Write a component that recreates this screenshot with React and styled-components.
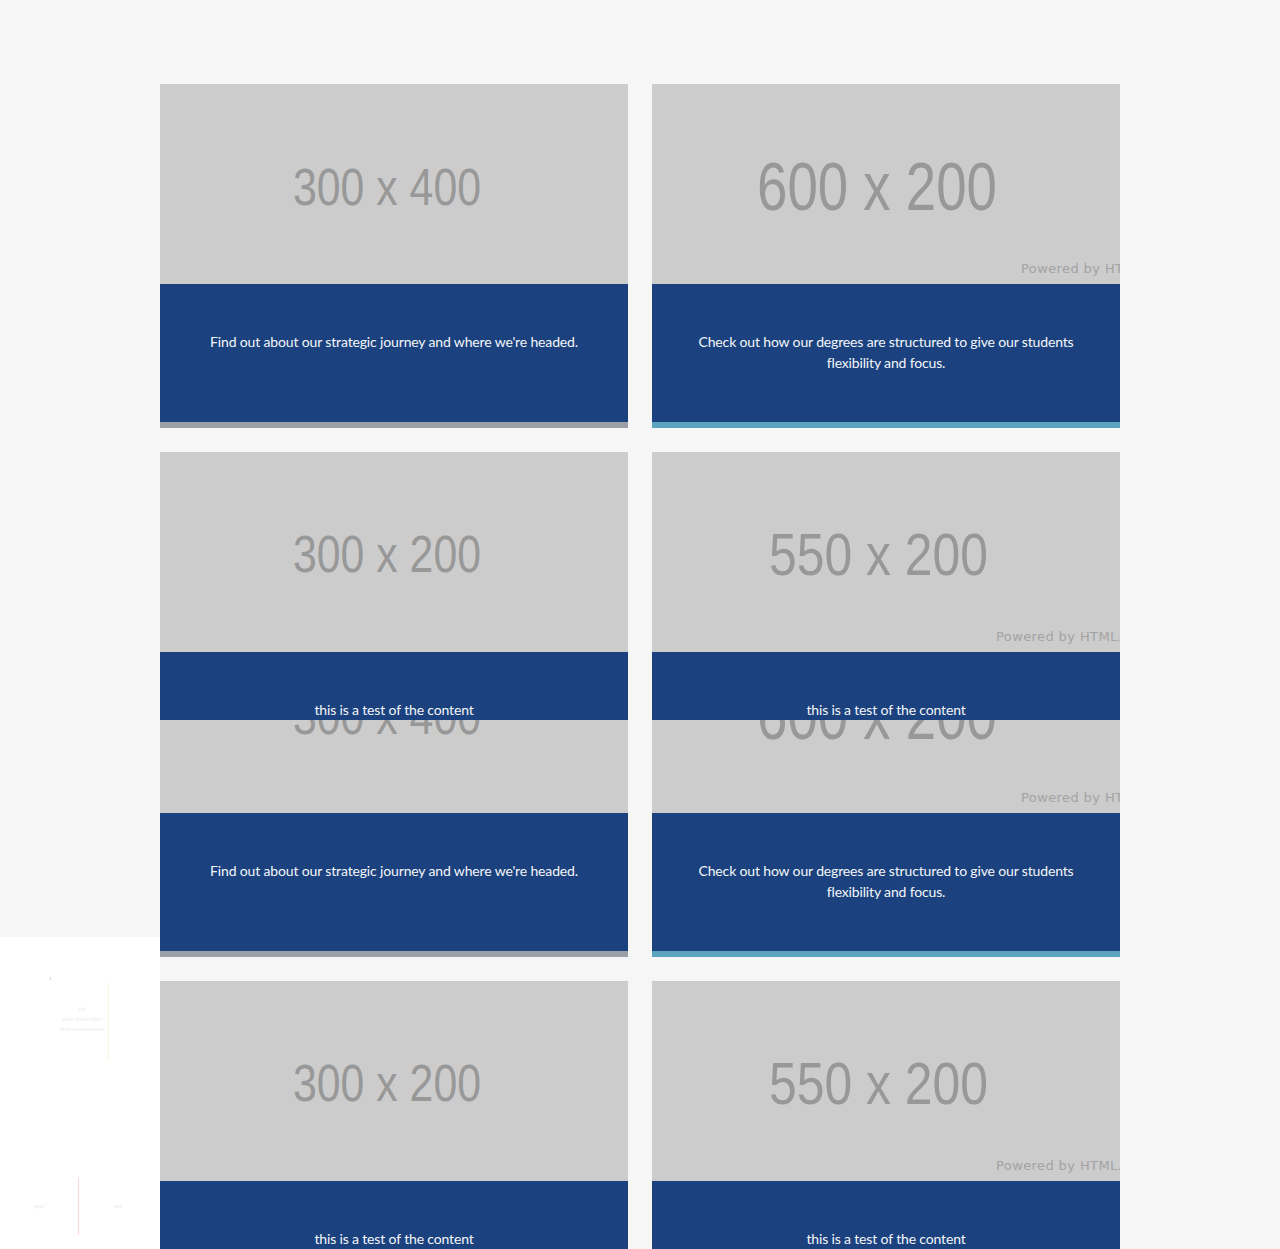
import React from "react";
import styled, { createGlobalStyle } from "styled-components";

const GlobalStyle = createGlobalStyle`
  html, body {
    margin: 0;
    padding: 0;
    background: #f6f6f6;
    overflow: hidden;
  }
  body {
    font-family: Lato, "Liberation Sans", sans-serif;
  }
`;

const Page = styled.div`
  display: grid;
  grid-template-columns: 160px 960px 1fr;
  padding-top: 84px;
  height: 1249px;
  box-sizing: border-box;
`;

const Sidebar = styled.aside`
  align-self: end;
  height: 312px;
  background: #ffffff;
  display: flex;
  flex-direction: column;
  justify-content: space-between;
  box-sizing: border-box;
  padding: 40px 0 14px 0;
`;

const SideTop = styled.div`
  display: flex;
  align-items: flex-start;
  padding-left: 50px;
`;

const Tick = styled.span`
  width: 1px;
  height: 3px;
  background: #d6d6d6;
`;

const SideBlock = styled.div`
  margin-top: 5px;
  margin-left: 4px;
  width: 54px;
  height: 78px;
  border-right: 1px solid #fbf6dc;
  display: flex;
  flex-direction: column;
  align-items: center;
  padding-top: 24px;
  box-sizing: border-box;
  gap: 4px;
  font-family: "Liberation Sans", sans-serif;
  font-size: 5px;
  line-height: 6px;
  color: #e9efe6;
  text-align: center;
`;

const SideBottom = styled.div`
  display: flex;
  align-items: center;
  height: 58px;
  font-family: "Liberation Sans", sans-serif;
  font-size: 5px;
  color: #e8e8ef;
`;

const SideLink = styled.span`
  width: 78px;
  text-align: center;
`;

const Divider = styled.span`
  width: 1px;
  align-self: stretch;
  background: #fbd7d7;
`;

const Content = styled.main`
  display: flex;
  flex-direction: column;
`;

const Row = styled.div`
  display: grid;
  grid-template-columns: 468px 468px;
  column-gap: 24px;
  margin-top: ${(p) => (p.$joined ? 0 : 24)}px;
  &:first-child {
    margin-top: 0;
  }
`;

const Card = styled.article`
  display: flex;
  flex-direction: column;
`;

const ImageFrame = styled.div`
  height: ${(p) => p.$h}px;
  overflow: hidden;
  display: flex;
  flex-direction: column;
  justify-content: flex-end;
  background: #cccccc;
  svg {
    flex-shrink: 0;
    display: block;
  }
`;

const Body = styled.div`
  height: ${(p) => p.$h}px;
  background: #1b427e;
  border-bottom: ${(p) => (p.$accent ? `6px solid ${p.$accent}` : "none")};
  box-sizing: content-box;
  padding: 47px 36px 0;
  margin: 0;
  color: #f4f6fa;
  font-size: 14px;
  line-height: 21px;
  letter-spacing: -0.15px;
  text-align: center;
  overflow: visible;
`;

const images = {
  "300x400": { label: "300 x 400", x: 133, len: 188, y: 121, size: 51.5 },
  "300x200": { label: "300 x 200", x: 133, len: 188, y: 120, size: 51.5 },
  "600x200": { label: "600 x 200", x: 105, len: 240, y: 126, size: 68.5, powered: 369 },
  "550x200": { label: "550 x 200", x: 117, len: 219, y: 123, size: 58.7, powered: 344 },
};

function Placeholder({ kind }) {
  const c = images[kind];
  return (
    <svg width="468" height="200" viewBox="0 0 468 200">
      <rect width="468" height="200" fill="#cccccc" />
      <text
        x={c.x}
        y={c.y}
        fontFamily="'Liberation Sans', Arial, sans-serif"
        fontSize={c.size}
        fill="#989898"
        textLength={c.len}
        lengthAdjust="spacingAndGlyphs"
      >
        {c.label}
      </text>
      {c.powered != null && (
        <text
          x={c.powered}
          y="189"
          fontFamily="'DejaVu Sans', sans-serif"
          fontSize="13"
          letterSpacing="0.4"
          fill="#a3a3a3"
        >
          Powered by HTML.COM
        </text>
      )}
    </svg>
  );
}

function Tile({ kind, imageH = 200, bodyH, accent, text }) {
  return (
    <Card>
      <ImageFrame $h={imageH}>
        <Placeholder kind={kind} />
      </ImageFrame>
      <Body $h={bodyH} $accent={accent}>
        {text}
      </Body>
    </Card>
  );
}

const T1 = "Find out about our strategic journey and where we're headed.";
const T2 =
  "Check out how our degrees are structured to give our students flexibility and focus.";
const T3 = "this is a test of the content";

export default function App() {
  return (
    <>
      <GlobalStyle />
      <Page>
        <Sidebar>
          <SideTop>
            <Tick />
            <SideBlock>
              <span>info</span>
              <span>lorem ipsum dolor</span>
              <span>sit amet consectetur</span>
            </SideBlock>
          </SideTop>
          <SideBottom>
            <SideLink>prev</SideLink>
            <Divider />
            <SideLink>next</SideLink>
          </SideBottom>
        </Sidebar>
        <Content>
          <Row>
            <Tile kind="300x400" bodyH={91} accent="#9ba0a7" text={T1} />
            <Tile kind="600x200" bodyH={91} accent="#5aa4c0" text={T2} />
          </Row>
          <Row>
            <Tile kind="300x200" bodyH={21} text={T3} />
            <Tile kind="550x200" bodyH={21} text={T3} />
          </Row>
          <Row $joined>
            <Tile kind="300x400" imageH={93} bodyH={91} accent="#9ba0a7" text={T1} />
            <Tile kind="600x200" imageH={93} bodyH={91} accent="#5aa4c0" text={T2} />
          </Row>
          <Row>
            <Tile kind="300x200" bodyH={21} text={T3} />
            <Tile kind="550x200" bodyH={21} text={T3} />
          </Row>
        </Content>
      </Page>
    </>
  );
}
